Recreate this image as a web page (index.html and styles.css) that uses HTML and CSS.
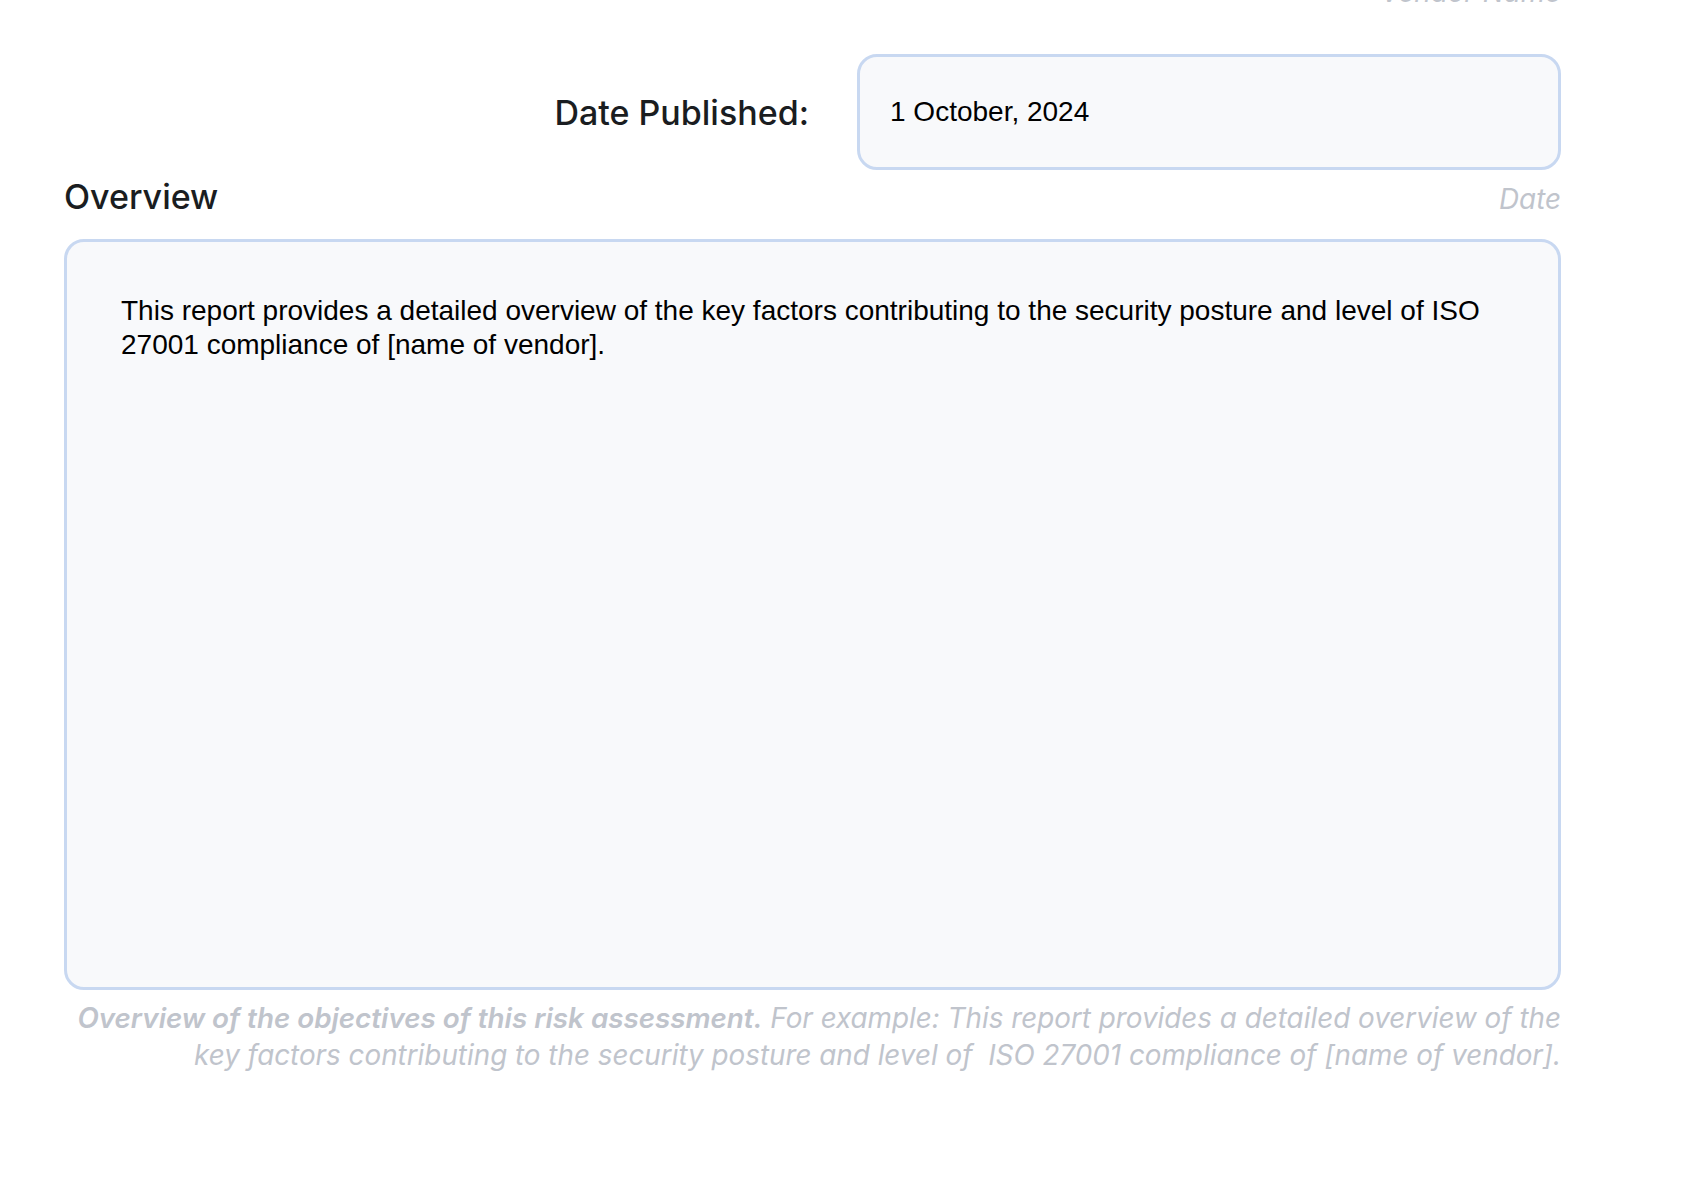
FILE: index.html
```html
<!DOCTYPE html>
<html lang="en">
  <head>
    <meta charset="UTF-8" />
    <meta name="viewport" content="width=device-width, initial-scale=1.0" />
    <title>Risk Assessment Report</title>
    <link rel="stylesheet" href="styles.css">
  </head>
  <body>
    <div class="page">
      <p class="hint hint-top">Vendor Name</p>

      <div class="field-row">
        <label class="field-label" for="datePublished">Date Published:</label>
        <div class="input" id="datePublished">1 October, 2024</div>
      </div>

      <div class="section-head">
        <h2>Overview</h2>
        <span class="hint">Date</span>
      </div>

      <div class="textarea">
        This report provides a detailed overview of the key factors contributing to the security posture and level of ISO 27001 compliance of [name of vendor].
      </div>
      <p class="hint hint-bottom">
        <strong>Overview of the objectives of this risk assessment.</strong> For example: This report provides a detailed overview of the key factors contributing to the security posture and level of&nbsp; ISO 27001 compliance of [name of vendor].
      </p>
    </div>
  </body>
</html>
```

FILE: styles.css
```css
/* Basic styling */
body {
  margin: 0;
  padding: 0;
  background-color: #fff;
  font-family: Inter, "Noto Sans", sans-serif;
  overflow: hidden;
}
.page {
  padding: 0 133px 0 64px;
}
.hint {
  margin: 0;
  color: #c0c4cc;
  font-size: 27.8px;
  font-style: italic;
  text-align: right;
}
.hint-top {
  margin-top: -24px;
  line-height: 33px;
}
.field-row {
  display: flex;
  justify-content: flex-end;
  align-items: center;
  gap: 48px;
  margin-top: 45px;
}
.field-label {
  color: #1a1d21;
  font-size: 34px;
  font-weight: 500;
}
.input {
  box-sizing: border-box;
  display: flex;
  align-items: center;
  width: 704px;
  height: 116px;
  padding: 0 30px;
  border: 3px solid #c8d8f1;
  border-radius: 20px;
  background-color: #f8f9fb;
  color: #000;
  font-family: "Liberation Sans", Arial, sans-serif;
  font-size: 28px;
}
.section-head {
  display: flex;
  justify-content: space-between;
  align-items: baseline;
  margin-top: 6px;
}
.section-head h2 {
  margin: 0;
  color: #1a1d21;
  font-size: 34px;
  font-weight: 500;
}
.textarea {
  box-sizing: border-box;
  height: 751px;
  margin-top: 22px;
  padding: 52px 54px;
  border: 3px solid #c8d8f1;
  border-radius: 20px;
  background-color: #f8f9fb;
  color: #000;
  font-family: "Liberation Sans", Arial, sans-serif;
  font-size: 28px;
  line-height: 1.2;
}
.hint-bottom {
  margin-top: 10px;
  line-height: 37px;
}
.hint-bottom strong {
  font-weight: 600;
}
```
